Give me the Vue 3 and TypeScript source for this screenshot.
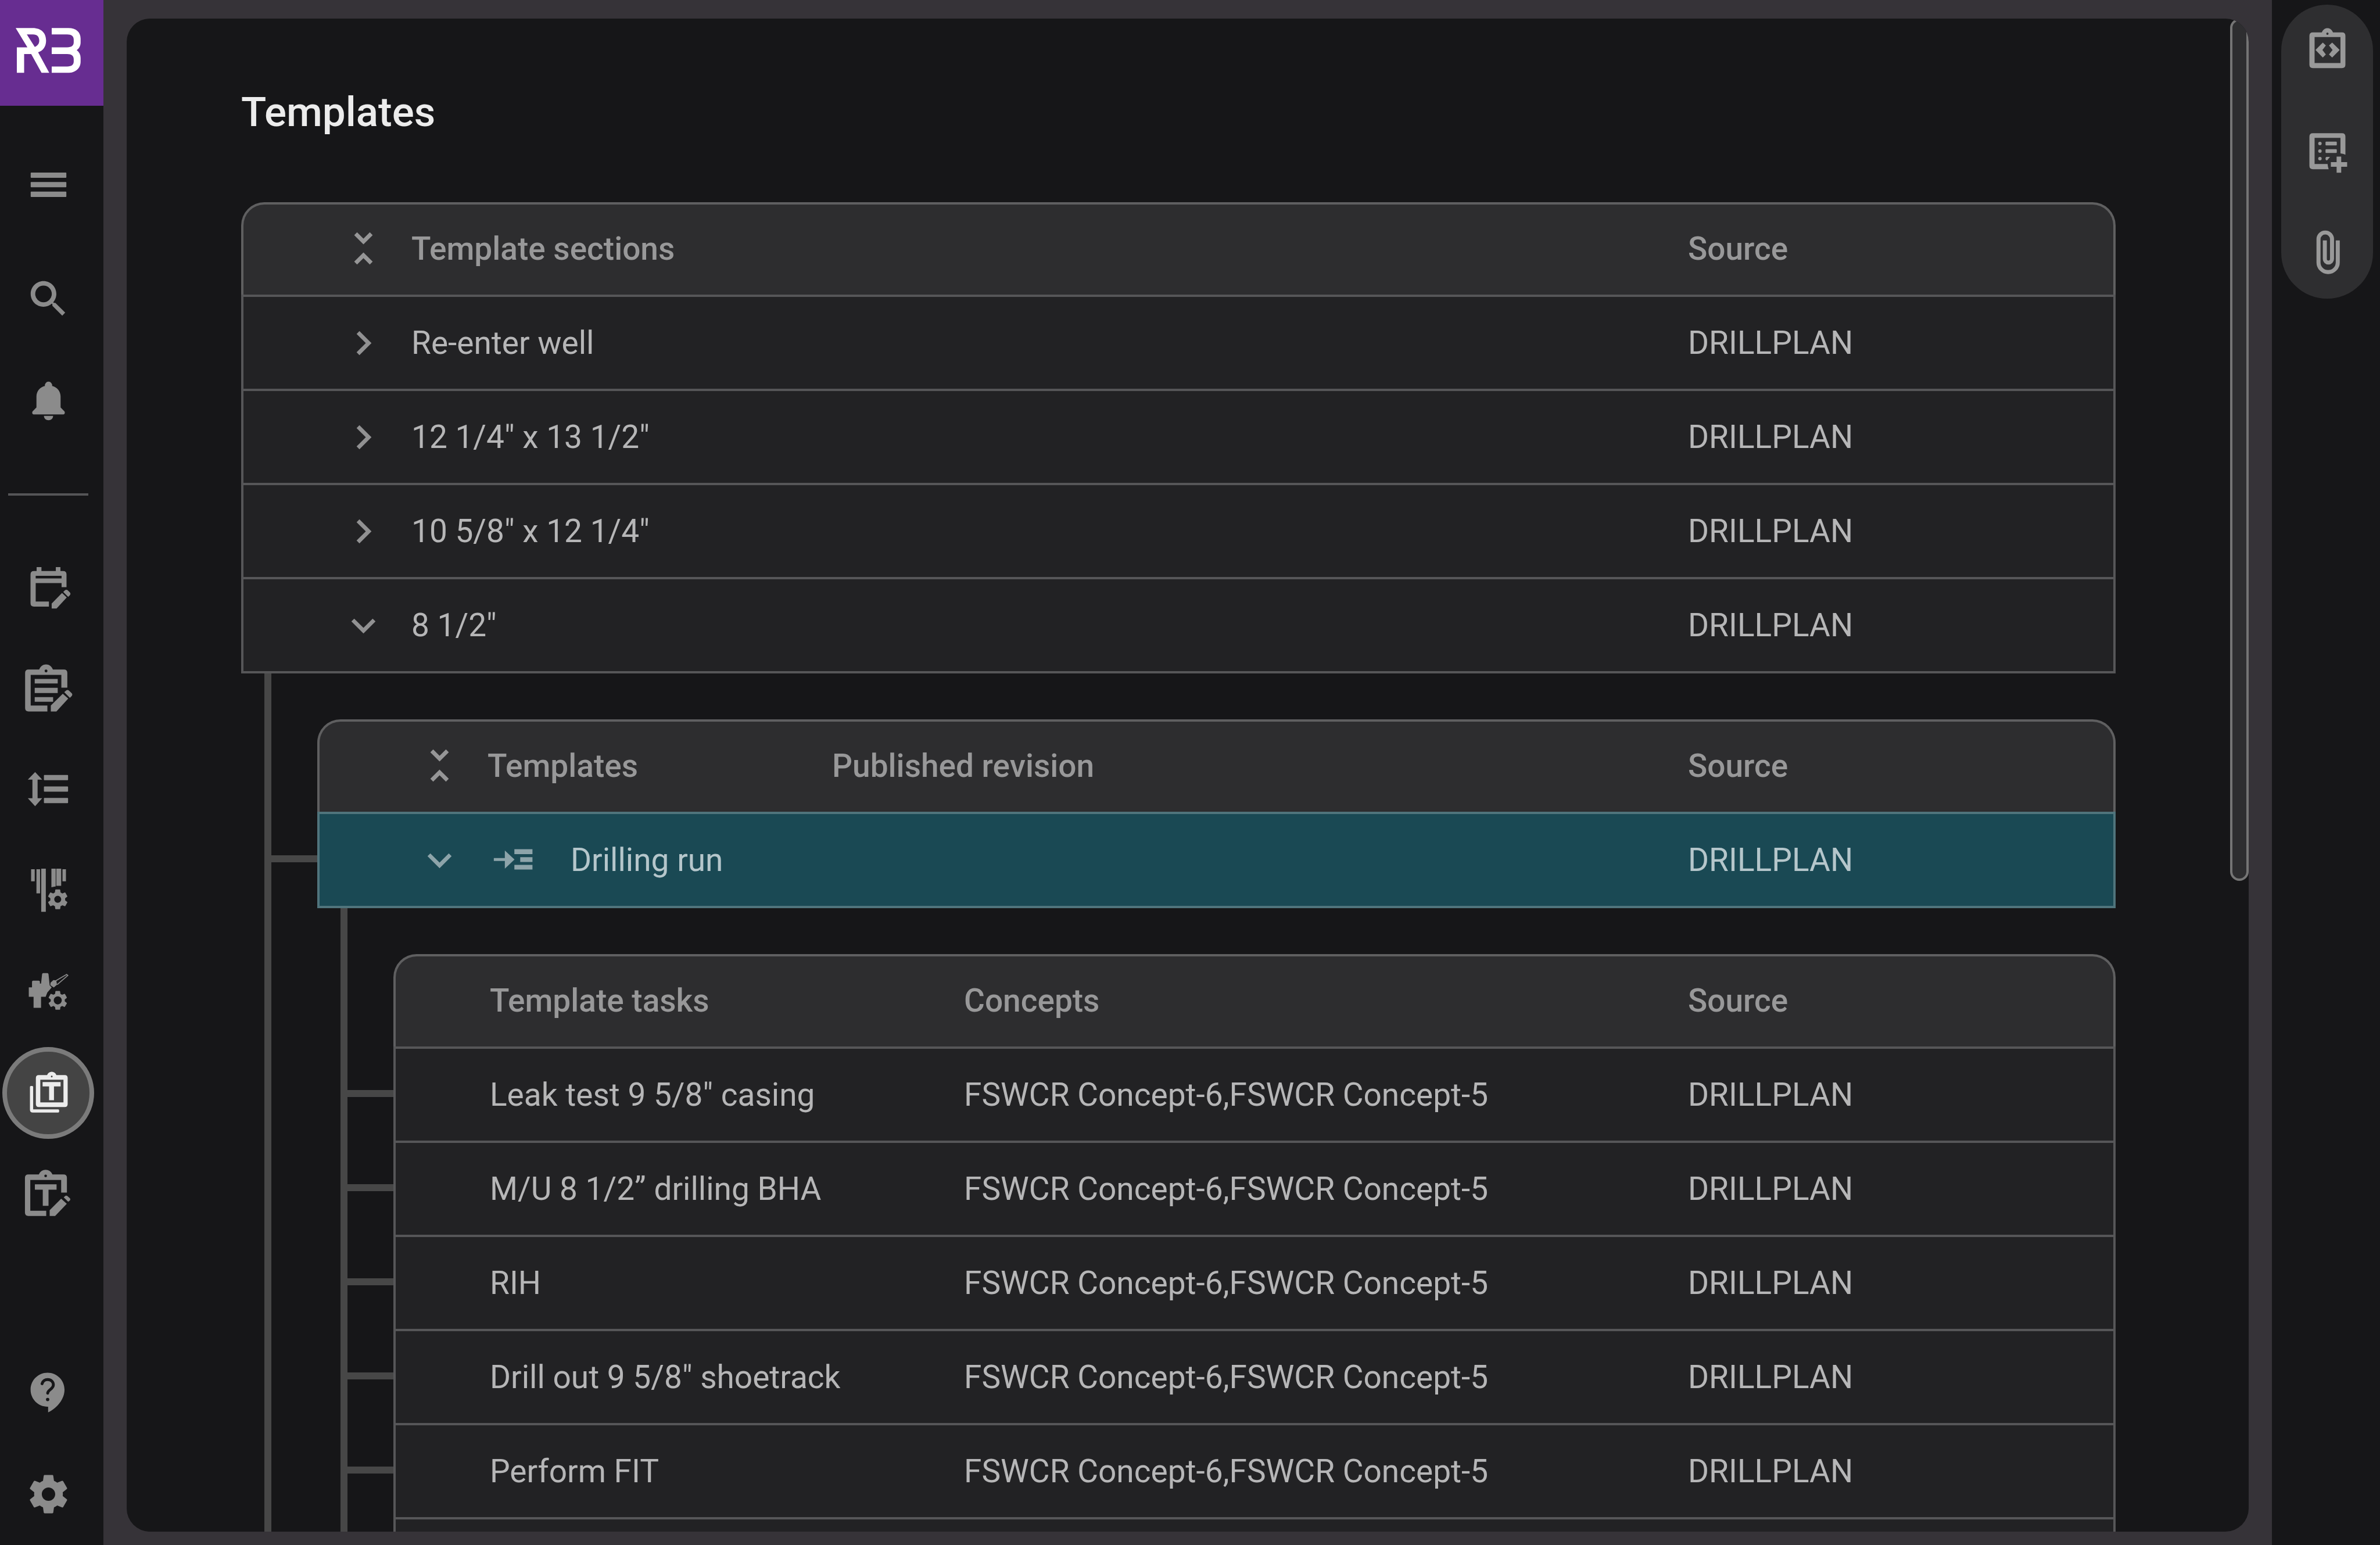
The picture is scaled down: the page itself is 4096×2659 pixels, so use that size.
<script setup lang="ts">
interface NavItem {
  id: string
  label: string
  active?: boolean
}

interface Section {
  name: string
  source: string
  open: boolean
}

interface Task {
  name: string
  concepts: string
  source: string
}

const topItems: NavItem[] = [
  { id: 'search', label: 'Search' },
  { id: 'bell', label: 'Notifications' },
]

const mainItems: NavItem[] = [
  { id: 'calendar', label: 'Schedule' },
  { id: 'clipboard', label: 'Reports' },
  { id: 'spacing', label: 'Activities' },
  { id: 'casing', label: 'Well setup' },
  { id: 'rig', label: 'Rig setup' },
  { id: 'stack', label: 'Templates', active: true },
  { id: 'template-edit', label: 'Edit templates' },
]

const footItems: NavItem[] = [
  { id: 'help', label: 'Help' },
  { id: 'settings', label: 'Settings' },
]

const railItems: NavItem[] = [
  { id: 'code', label: 'Import' },
  { id: 'list-add', label: 'Add list' },
  { id: 'clip', label: 'Attachments' },
]

const sections: Section[] = [
  { name: 'Re-enter well', source: 'DRILLPLAN', open: false },
  { name: '12 1/4" x 13 1/2"', source: 'DRILLPLAN', open: false },
  { name: '10 5/8" x 12 1/4"', source: 'DRILLPLAN', open: false },
  { name: '8 1/2"', source: 'DRILLPLAN', open: true },
]

const concepts = 'FSWCR Concept-6,FSWCR Concept-5'

const tasks: Task[] = [
  { name: 'Leak test 9 5/8" casing', concepts, source: 'DRILLPLAN' },
  { name: 'M/U 8 1/2” drilling BHA', concepts, source: 'DRILLPLAN' },
  { name: 'RIH', concepts, source: 'DRILLPLAN' },
  { name: 'Drill out 9 5/8" shoetrack', concepts, source: 'DRILLPLAN' },
  { name: 'Perform FIT', concepts, source: 'DRILLPLAN' },
  { name: '', concepts: '', source: '' },
]

const gear =
  'M19.43 12.98c.04-.32.07-.64.07-.98s-.03-.66-.07-.98l2.11-1.65c.19-.15.24-.42.12-.64l-2-3.46c-.12-.22-.39-.3-.61-.22l-2.49 1c-.52-.4-1.08-.73-1.69-.98l-.38-2.65C14.46 2.18 14.25 2 14 2h-4c-.25 0-.46.18-.49.42l-.38 2.65c-.61.25-1.17.59-1.69.98l-2.49-1c-.23-.09-.49 0-.61.22l-2 3.46c-.13.22-.07.49.12.64l2.11 1.65c-.04.32-.07.65-.07.98s.03.66.07.98l-2.11 1.65c-.19.15-.24.42-.12.64l2 3.46c.12.22.39.3.61.22l2.49-1c.52.4 1.08.73 1.69.98l.38 2.65c.03.24.24.42.49.42h4c.25 0 .46-.18.49-.42l.38-2.65c.61-.25 1.17-.59 1.69-.98l2.49 1c.23.09.49 0 .61-.22l2-3.46c.12-.22.07-.49-.12-.64l-2.11-1.65zM12 15.5c-1.93 0-3.5-1.57-3.5-3.5s1.57-3.5 3.5-3.5 3.5 1.57 3.5 3.5-1.57 3.5-3.5 3.5z'

/* Icon shapes on a 96 x 96 grid; every path is filled with the even-odd rule. */
const shapes: Record<string, string[]> = {
  menu: [
    'M18 26.2h60q1 0 1 1v7.200q0 1-1 1H18q-1 0-1-1V27.200q0-1 1-1z',
    'M18 42.700h60q1 0 1 1v7.200q0 1-1 1H18q-1 0-1-1V43.700q0-1 1-1z',
    'M18 59.400h60q1 0 1 1v7.200q0 1-1 1H18q-1 0-1-1V60.400q0-1 1-1z',
  ],
  bell: [
    'M48 16a6.5 6.5 0 0 1 6.3 7.5C63 25.5 69 33 69 42v19l6.5 6.5c1.6 2 .8 5.5-1.5 5.5H22c-2.300 0-3.100-3.500-1.500-5.500L27 61V42c0-9 6-16.500 14.700-18.500A6.500 6.500 0 0 1 48 16z',
    'M40 75.5h16c0 4.5-3.600 7.500-8 7.500s-8-3-8-7.500z',
  ],
  calendar: [
    'M16.7 25q0-6 6-6h4.6v-7h8.400v7h25v-7h8v7h4.600q6 0 6 6v22h-8.600v-7H25.700v32h23v8.800h-26q-6 0-6-6zM25.700 27.200h45v4.600h-45z',
    'M53.5 84v-8.500L71.500 57l8.200 8L62 84z',
    'M73.6 55.4l2.600-2.500q2.800-2.600 5.600 0l3 3q2.700 2.700 0 5.500l-2.600 2.600z',
  ],
  clipboard: [
    'M7.3 20.300q0-6 6-6h18.500C34 8.500 38.500 5.500 43.700 5.500s9.700 3 11.900 8.800h19.100q6 0 6 6V46H70.300V23.800H17V77h29v10.400H13.300q-6 0-6-6zM43.700 14.500a2.500 2.500 0 1 0 0 5 2.500 2.500 0 0 0 0-5z',
    'M24 30.7h40v8H24zM24 46.300h40v9H24zM24 62.500h32v8H24z',
    'M52 87.4V77l20.800-20.500 9.500 8.500-20.600 22.400z',
    'M75.4 53.8l2.800-2.600q2.800-2.600 5.600 0l4.200 4.200q2.700 2.700 0 5.500l-2.900 2.700z',
  ],
  spacing: [
    'M24.7 17L37 30h-8v32.500h8l-12.300 13.800L12 62.500h8V30h-8z',
    'M42 22h39q1 0 1 1v7q0 1-1 1H41q-1 0-1-1v-7q0-1 1-1zM41 42h40q1 0 1 1v7q0 1-1 1H41q-1 0-1-1v-7q0-1 1-1zM41 62h40q1 0 1 1v7q0 1-1 1H41q-1 0-1-1v-7q0-1 1-1z',
  ],
  casing: [
    'M17.7 10h6.300v21h-6.300zM27 10h6.300v42H27zM35.300 9h8v75h-8zM53 9h7.500v31L53 41.500zM61.500 9H70v30h-8.500zM72.300 10h6v21h-6z',
  ],
  rig: [
    'M13.7 39.6h5.600V30q0-2 2-2H31q2 0 2 2v3h2l1.800-16q.2-2 2-2H46q1.800 0 2 2l2 19 3.500 4-7.500 8.500-3 7.500h-8V75.400H22V56h-8.300z',
    'M51.5 31.5l5-4.500 5 .5 1.200 7.500-5.500 4.800-6-4z',
  ],
  stack: [
    'M26 21.4q0-5 5-5h14.500c1.500-3.800 4.500-5.900 8.100-5.900s6.600 2.100 8.100 5.900h14.600q5 0 5 5V67q0 5-5 5H31q-5 0-5-5zM33.700 24.400V64H74V24.400zM53.600 17.500a1.500 1.500 0 1 0 0 3 1.500 1.500 0 0 0 0-3z',
    'M37.7 28.6h31.300v7.600H57.500v24H49v-24H37.700z',
    'M15.7 37q0-1.700 1.700-1.700h2.200q1.700 0 1.700 1.700v39h43.500q1.700 0 1.700 1.700v2.200q0 1.700-1.700 1.700H20.700q-5 0-5-5z',
  ],
  'template-edit': [
    'M7 19.4q0-6 6-6h18.200C33.400 8.400 37.900 5.400 43 5.400s9.600 3 11.800 8H74q6 0 6 6V45H70V23H16.300v53.500H44v9.200H13q-6 0-6-6zM43 13.700a2.300 2.300 0 1 0 0 4.600 2.300 2.300 0 0 0 0-4.600z',
    'M24.3 30.6H62v9.300H48V68H38V39.900H24.300z',
    'M50 85.7V75.500l20-20 9.800 8.800-20.300 21.400z',
    'M74.5 53.3l1.800-1.800q2.300-2.300 4.600-.5l4 3.600q2 2.200 0 4.200l-2.700 2z',
  ],
  code: [
    'M16.7 22q0-6 6-6h15.600c1.800-4.700 5.300-7.400 9.700-7.400s7.900 2.700 9.700 7.400h15.600q6 0 6 6v50q0 6-6 6H22.700q-6 0-6-6zM25.700 24v45.300h45V24zM48 16.200a2 2 0 1 0 0 4 2 2 0 0 0 0-4z',
    'M27.3 46.4L40 33.600l5.300 5-6 7.800 6 7.900-5.300 5.300zM69.300 46.400L56.300 33.600l-5.600 5 6.300 7.800-6.300 7.900 5.600 5.300z',
  ],
  'list-add': [
    'M16.7 21.4q0-6 6-6h50.600q6 0 6 6v31.400q-4-1.800-8.600-2.200v-27h-45V69h22.600q.4 5 1.900 9H22.700q-6 0-6-6z',
    'M35 30.3a3 3 0 1 0 0 6 3 3 0 0 0 0-6zM35 43.500a3 3 0 1 0 0 6 3 3 0 0 0 0-6zM35 56.700a3 3 0 1 0 0 6 3 3 0 0 0 0-6z',
    'M46 30h17q1.300 0 1.300 1.300v4q0 1.300-1.300 1.300H46q-1.300 0-1.300-1.300v-4Q44.700 30 46 30zM46 43.200h17q1.300 0 1.300 1.300v4q0 1.300-1.300 1.300H46q-1.300 0-1.300-1.300v-4q0-1.300 1.300-1.300zM47 56.500h5.500l-5 6.100H47q-2.300 0-2.300-3t2.300-3.100z',
    'M64 56.2h8v9.600h10.300v8H72v10.400h-8V73.800H54v-8h10z',
  ],
}
</script>

<template>
  <div class="app">
    <aside class="sidebar">
      <a class="logo" href="#" aria-label="Home">
        <svg viewBox="0 0 180 184" aria-hidden="true">
          <path d="M27.3 48.7H57C72 48.700 80.200 57.500 80.200 70.500C80.200 81 75 88.500 66.300 90.900L85.700 126.700H72.300L54.300 94H42V126.700H29.300V82.300H47.700zM46.700 60L60.500 81.700C65.500 79.500 68.300 76 68.300 70.700C68.300 64 64.500 60 57.500 60z" />
          <path d="M90 48.7h29c13.500 0 21.300 7 21.300 18.500v6.500c0 5.600-2.300 10.100-6.800 13.600 4.500 3.500 6.800 8 6.800 13.500v6.500c0 11.500-9 19.400-22.300 19.400H90v-11h27c7.500 0 11.300-3.200 11.300-8.500v-4.500c0-5.300-3.800-8.700-11.300-8.700H90V82.300h27c7.500 0 11.300-3.300 11.300-8.800v-4.700c0-5.400-3.800-8.800-11.300-8.800H90z" />
        </svg>
      </a>

      <button class="nav-button menu" type="button" aria-label="Menu">
        <svg class="icon" viewBox="0 0 96 96" aria-hidden="true">
          <path v-for="d in shapes.menu" :key="d" :d="d" />
        </svg>
      </button>

      <nav class="group">
        <button v-for="item in topItems" :key="item.id" class="nav-button" type="button" :aria-label="item.label">
          <svg class="icon" viewBox="0 0 96 96" aria-hidden="true">
            <g v-if="item.id === 'search'" transform="translate(6.7 6.7) scale(3.43)">
              <path d="M15.5 14h-.79l-.28-.27C15.41 12.59 16 11.11 16 9.5 16 5.91 13.09 3 9.5 3S3 5.91 3 9.5 5.91 16 9.5 16c1.61 0 3.09-.59 4.23-1.57l.27.28v.79l5 4.99L20.49 19l-4.99-5zm-6-.3a4.200 4.200 0 1 1 0-8.400 4.200 4.200 0 0 1 0 8.400z" />
            </g>
            <path v-for="d in shapes[item.id] ?? []" :key="d" :d="d" />
          </svg>
        </button>
      </nav>

      <hr class="divider" />

      <nav class="group">
        <button
          v-for="item in mainItems"
          :key="item.id"
          class="nav-button"
          :class="{ active: item.active }"
          type="button"
          :aria-label="item.label"
        >
          <span class="halo">
            <svg class="icon" viewBox="0 0 96 96" aria-hidden="true">
              <path v-for="d in shapes[item.id]" :key="d" :d="d" />
              <path v-if="item.id === 'casing'" :d="gear" transform="translate(43.4 41.8) scale(1.72)" />
              <template v-if="item.id === 'rig'">
                <path d="M61 28L79.5 17.2l2 1.8L63 35" fill="none" stroke="currentColor" stroke-width="1.8" />
                <g transform="translate(44.5 42.8) scale(1.63)">
                  <path :d="gear" />
                  <circle class="hole" cx="12" cy="12" r="4.3" />
                </g>
              </template>
            </svg>
          </span>
        </button>
      </nav>

      <nav class="group foot">
        <button v-for="item in footItems" :key="item.id" class="nav-button" type="button" :aria-label="item.label">
          <svg class="icon" viewBox="0 0 96 96" aria-hidden="true">
            <template v-if="item.id === 'help'">
              <path d="M46.3 12.7c-16.300 0-29.500 13.200-29.500 29.500s13.200 29.500 29.500 29.500h1v10C64 73.500 75.800 58 75.800 42.200c0-16.300-13.200-29.500-29.500-29.500z" />
              <path class="mark" d="M36.8 31.800c1.200-4.700 5.200-7.300 9.800-7.300 5.600 0 9.800 3.800 9.800 9.300 0 7.200-9.600 8.400-9.800 14.400" />
              <circle class="hole" cx="46.5" cy="59.2" r="2.9" />
            </template>
            <path v-else :d="gear" transform="translate(8 8) scale(3.33)" />
          </svg>
        </button>
      </nav>
    </aside>

    <div class="stage">
      <main class="panel">
        <div class="content">
          <h1>Templates</h1>

          <table class="grid sections">
            <colgroup>
              <col />
              <col class="col-source" />
            </colgroup>
            <thead>
              <tr>
                <th scope="col">
                  <div class="name">
                    <button class="toggle" type="button" aria-label="Collapse all sections">
                      <svg viewBox="0 0 24 24" aria-hidden="true">
                        <path d="M7.41 18.59L8.83 20 12 16.83 15.17 20l1.41-1.41L12 14zM16.59 5.41L15.17 4 12 7.17 8.83 4 7.41 5.41 12 10z" />
                      </svg>
                    </button>
                    <span>Template sections</span>
                  </div>
                </th>
                <th scope="col">Source</th>
              </tr>
            </thead>
            <tbody>
              <tr v-for="section in sections" :key="section.name">
                <td>
                  <div class="name">
                    <button class="toggle" type="button" :aria-expanded="section.open" aria-label="Toggle section">
                      <svg viewBox="0 0 24 24" aria-hidden="true">
                        <path v-if="section.open" d="M16.59 8.59L12 13.17 7.41 8.59 6 10l6 6 6-6z" />
                        <path v-else d="M10 6L8.59 7.41 13.17 12l-4.58 4.59L10 18l6-6z" />
                      </svg>
                    </button>
                    <span>{{ section.name }}</span>
                  </div>
                </td>
                <td>{{ section.source }}</td>
              </tr>
            </tbody>
          </table>

          <div class="branch">
            <table class="grid templates linked">
              <colgroup>
                <col class="col-template" />
                <col />
                <col class="col-source" />
              </colgroup>
              <thead>
                <tr>
                  <th scope="col">
                    <div class="name">
                      <button class="toggle" type="button" aria-label="Collapse all templates">
                        <svg viewBox="0 0 24 24" aria-hidden="true">
                          <path d="M7.41 18.59L8.83 20 12 16.83 15.17 20l1.41-1.41L12 14zM16.59 5.41L15.17 4 12 7.17 8.83 4 7.41 5.41 12 10z" />
                        </svg>
                      </button>
                      <span>Templates</span>
                    </div>
                  </th>
                  <th scope="col">Published revision</th>
                  <th scope="col">Source</th>
                </tr>
              </thead>
              <tbody>
                <tr class="selected">
                  <td>
                    <div class="name">
                      <button class="toggle" type="button" aria-expanded="true" aria-label="Toggle template">
                        <svg viewBox="0 0 24 24" aria-hidden="true">
                          <path d="M16.59 8.59L12 13.17 7.41 8.59 6 10l6 6 6-6z" />
                        </svg>
                      </button>
                      <svg class="insert" viewBox="0 0 84 84" aria-hidden="true">
                        <path d="M11 38.3h19.200V25L47 40.800 30.200 56.700V43.300H11zM46.800 22.800h31.500v8.600H46.800zM57 36.600h21.300v8.400H57zM46.800 50h31.500v8.200H46.800z" />
                      </svg>
                      <span>Drilling run</span>
                    </div>
                  </td>
                  <td></td>
                  <td>DRILLPLAN</td>
                </tr>
              </tbody>
            </table>

            <div class="branch">
              <table class="grid tasks linked">
                <colgroup>
                  <col class="col-task" />
                  <col />
                  <col class="col-source" />
                </colgroup>
                <thead>
                  <tr>
                    <th scope="col">Template tasks</th>
                    <th scope="col">Concepts</th>
                    <th scope="col">Source</th>
                  </tr>
                </thead>
                <tbody>
                  <tr v-for="task in tasks" :key="task.name">
                    <td>{{ task.name }}</td>
                    <td>{{ task.concepts }}</td>
                    <td>{{ task.source }}</td>
                  </tr>
                </tbody>
              </table>
            </div>
          </div>
        </div>
        <div class="track"><div class="thumb"></div></div>
      </main>
    </div>

    <aside class="rail">
      <div class="pill">
        <button v-for="item in railItems" :key="item.id" type="button" :aria-label="item.label">
          <svg class="icon" viewBox="0 0 96 96" aria-hidden="true">
            <path v-for="d in shapes[item.id] ?? []" :key="d" :d="d" />
            <path
              v-if="item.id === 'clip'"
              class="wire"
              d="M66 26v38.3a16.750 16.750 0 0 1-33.500 0V24a11.750 11.750 0 0 1 23.500 0v34.300a6.250 6.250 0 0 1-12.500 0V26"
            />
          </svg>
        </button>
      </div>
    </aside>
  </div>
</template>

<style>
html,
body {
  margin: 0;
  background: #161618;
}
</style>

<style scoped>
.app {
  --base: #161618;
  --line: rgba(255, 255, 255, 0.24);
  --icon: rgba(255, 255, 255, 0.5);
  --tree: #474747;
  display: flex;
  height: 100vh;
  overflow: hidden;
  background: var(--base);
  color: #b6b6b7;
  font-family: Roboto, 'Liberation Sans', sans-serif;
  font-size: 55px;
  line-height: 72px;
}

.app *,
.app *::before {
  box-sizing: border-box;
}

button {
  display: flex;
  align-items: center;
  justify-content: center;
  margin: 0;
  padding: 0;
  border: 0;
  background: none;
  color: inherit;
  font: inherit;
}

svg {
  display: block;
  flex: none;
  fill: currentColor;
  fill-rule: evenodd;
}

.icon {
  width: 95px;
  height: 95px;
}

.hole {
  fill: var(--base);
}

.mark {
  fill: none;
  stroke: var(--base);
  stroke-width: 5;
  stroke-linecap: round;
}

.wire {
  fill: none;
  stroke: currentColor;
  stroke-width: 7;
}

/* Left navigation */
.sidebar {
  display: flex;
  flex: none;
  flex-direction: column;
  width: 178px;
  padding-bottom: 1px;
  color: #8b8b8b;
}

.logo {
  display: block;
  height: 182px;
  background: #672d91;
}

.logo svg {
  width: 178px;
  height: 182px;
  fill: #fff;
}

.group {
  display: flex;
  flex-direction: column;
}

.nav-button {
  width: 166px;
  height: 174px;
}

.menu {
  margin: 49px 0 22px;
}

.divider {
  flex: none;
  width: 138px;
  height: 4px;
  margin: 74px 0 71px 14px;
  border: 0;
  background: #555557;
}

.halo {
  display: flex;
  align-items: center;
  justify-content: center;
  width: 158px;
  height: 158px;
}

.active .halo {
  border: 8px solid #7b7b7b;
  border-radius: 50%;
  background: #444;
  color: #ececec;
}

.foot {
  margin-top: auto;
}

/* Centre */
.stage {
  display: flex;
  flex: 1;
  min-width: 0;
  padding: 32px 40px 23px;
  background: #363338;
}

.panel {
  display: flex;
  flex: 1;
  min-width: 0;
  overflow: hidden;
  border-radius: 40px;
  background: var(--base);
}

.content {
  flex: 1;
  min-width: 0;
  padding: 119px 197px 0;
}

.track {
  flex: none;
  width: 32px;
}

.thumb {
  height: 57%;
  border: 4px solid #757575;
  border-radius: 16px;
  background: #2e2e30;
}

h1 {
  margin: 0 0 113px;
  color: #ececec;
  font-size: 71px;
  font-weight: 500;
  line-height: 84px;
}

/* Tables */
.grid {
  width: 100%;
  border-spacing: 0;
  table-layout: fixed;
}

.col-source {
  width: 736px;
}

.col-template {
  width: 886px;
}

.col-task {
  width: 982px;
}

th,
td {
  padding: 0;
  border: 0 solid var(--line);
  border-top-width: 4px;
  text-align: left;
  vertical-align: middle;
  white-space: nowrap;
}

th {
  height: 159px;
  padding-bottom: 4px;
  background: #2d2d2f;
  color: #989899;
  font-weight: 500;
}

td {
  height: 162px;
  background: #222224;
}

th:first-child,
td:first-child {
  position: relative;
  padding-left: 165px;
  border-left-width: 4px;
}

th:last-child,
td:last-child {
  border-right-width: 4px;
}

th:first-child {
  border-top-left-radius: 40px;
}

th:last-child {
  border-top-right-radius: 40px;
}

tbody tr:last-child td {
  height: 166px;
  border-bottom-width: 4px;
}

.tasks th:first-child,
.tasks td:first-child {
  padding-left: 162px;
}

.selected td {
  background: #1a4954;
  color: #b5c6cb;
}

.name {
  display: flex;
  align-items: center;
}

.toggle {
  width: 83px;
  height: 83px;
  margin-right: 41px;
  color: var(--icon);
}

.toggle svg,
.insert {
  width: 83px;
  height: 83px;
}

.insert {
  margin-right: 60px;
  color: var(--icon);
}

/* Tree connectors */
.branch {
  margin-left: 40px;
  padding: 79px 0 0 79px;
  border-left: 12px solid var(--tree);
}

.linked td:first-child::before {
  content: '';
  position: absolute;
  top: 71px;
  left: -83px;
  width: 79px;
  height: 12px;
  background: var(--tree);
}

/* Right rail */
.rail {
  flex: none;
  width: 186px;
  padding: 8px 12px 0 16px;
}

.pill {
  display: flex;
  flex-direction: column;
  gap: 16px;
  border-radius: 79px;
  background: #2e2e30;
  color: #999;
}

.pill button {
  height: 158px;
}
</style>
